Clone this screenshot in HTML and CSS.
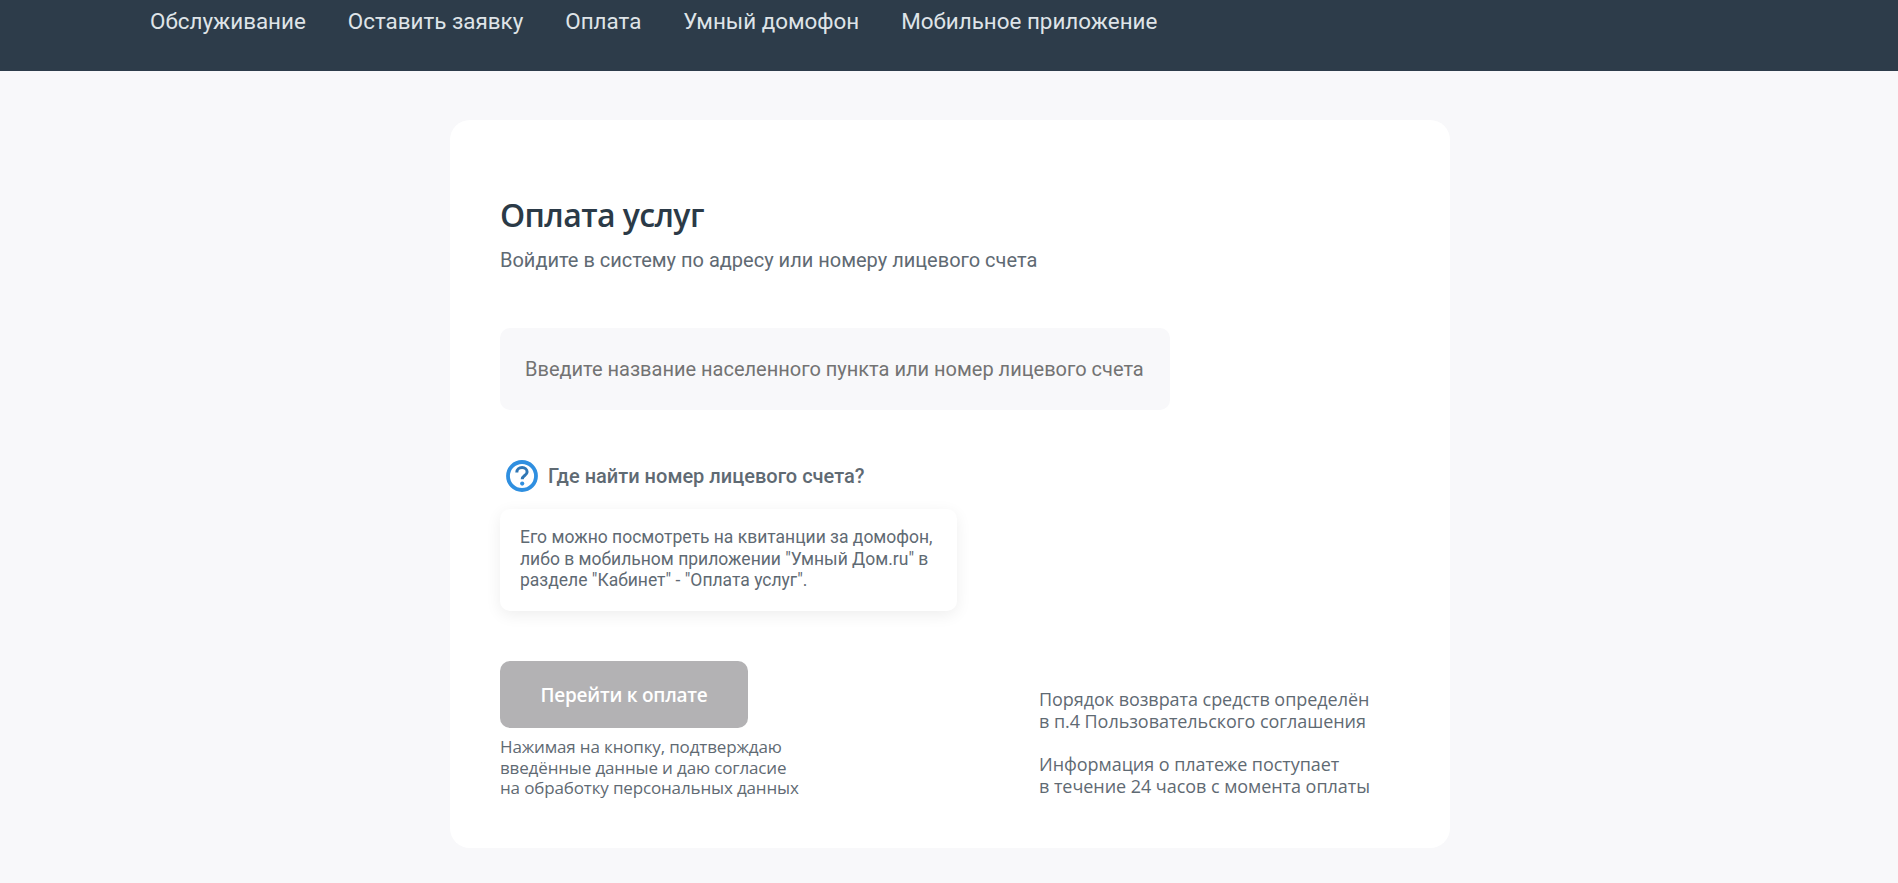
FILE: index.html
```html
<!DOCTYPE html>
<html lang="ru">
<head>
  <meta charset="UTF-8">
  <meta name="viewport" content="width=device-width, initial-scale=1.0">
  <title>Оплата услуг</title>
  <link rel="stylesheet" href="styles.css">
</head>
<body>
  <header class="topbar">
    <nav class="nav">
      <a class="nav-link" href="#">Обслуживание</a>
      <a class="nav-link" href="#">Оставить заявку</a>
      <a class="nav-link" href="#">Оплата</a>
      <a class="nav-link" href="#">Умный домофон</a>
      <a class="nav-link" href="#">Мобильное приложение</a>
    </nav>
  </header>

  <main class="card">
    <h1 class="title">Оплата услуг</h1>
    <p class="subtitle">Войдите в систему по адресу или номеру лицевого счета</p>

    <input class="search" type="text" placeholder="Введите название населенного пункта или номер лицевого счета">

    <div class="help">
      <svg class="help-icon" viewBox="0 0 32 32" width="32" height="32" aria-hidden="true">
        <circle cx="16" cy="16" r="14" fill="none" stroke="#2f8fe0" stroke-width="3.8"/>
        <path d="M10.8 12.4c0-3 2.3-4.8 5.3-4.8 2.9 0 5 1.8 5 4.3 0 3.6-4.9 3.7-4.9 7.4" fill="none" stroke="#2f76b4" stroke-width="3"/>
        <circle cx="16.2" cy="23.6" r="2.1" fill="#2f8fe0"/>
      </svg>
      <span class="help-label">Где найти номер лицевого счета?</span>
    </div>

    <div class="hint">
      Его можно посмотреть на квитанции за домофон,<br>
      либо в мобильном приложении "Умный Дом.ru" в<br>
      разделе "Кабинет" - "Оплата услуг".
    </div>

    <div class="bottom">
      <div class="pay">
        <button class="pay-button" type="button">Перейти к оплате</button>
        <p class="consent">Нажимая на кнопку, подтверждаю<br>введённые данные и даю согласие<br>на обработку персональных данных</p>
      </div>
      <div class="notes">
        <p class="note">Порядок возврата средств определён<br>в п.4 Пользовательского соглашения</p>
        <p class="note">Информация о платеже поступает<br>в течение 24 часов с момента оплаты</p>
      </div>
    </div>
  </main>
</body>
</html>
```

FILE: styles.css
```css
body {
  margin: 0;
  background-color: #f8f8fa;
  font-family: 'Roboto', sans-serif;
  color: #5f6a73;
}
.topbar {
  background-color: #2d3c4a;
  height: 71px;
}
.nav {
  display: flex;
  gap: 42px;
  padding: 7px 0 0 150px;
}
.nav-link {
  color: #dfe4e8;
  font-size: 22.4px;
  line-height: 29px;
  text-decoration: none;
}
.card {
  box-sizing: border-box;
  width: 1000px;
  height: 728px;
  margin: 49px 0 0 450px;
  padding: 75px 50px 0;
  background-color: #fff;
  border-radius: 20px;
}
.title {
  margin: 0;
  color: #2b3a47;
  font-family: 'Open Sans', sans-serif;
  font-size: 32px;
  font-weight: 600;
  letter-spacing: -0.6px;
  line-height: 40px;
}
.subtitle {
  margin: 13px 0 0;
  font-size: 20px;
  line-height: 24px;
}
.search {
  display: block;
  box-sizing: border-box;
  width: 670px;
  height: 82px;
  margin-top: 56px;
  padding: 0 25px;
  background-color: #f8f8fa;
  border: none;
  border-radius: 10px;
  font-family: 'Roboto', sans-serif;
  font-size: 20px;
}
.search::placeholder {
  color: #737373;
  opacity: 1;
}
.help {
  display: flex;
  align-items: center;
  gap: 10px;
  margin: 50px 0 0 6px;
}
.help-label {
  font-size: 20px;
  font-weight: 500;
  line-height: 32px;
}
.hint {
  box-sizing: border-box;
  width: 457px;
  height: 102px;
  margin-top: 17px;
  padding: 18px 20px;
  border-radius: 10px;
  box-shadow: 0 4px 16px rgba(0, 0, 0, 0.07);
  font-size: 17.5px;
  line-height: 21.5px;
}
.bottom {
  display: flex;
  margin-top: 50px;
}
.pay {
  width: 539px;
}
.pay-button {
  display: block;
  width: 248px;
  height: 67px;
  background-color: #b3b2b4;
  border: none;
  border-radius: 10px;
  color: #fff;
  font-family: 'Open Sans', sans-serif;
  font-size: 19px;
  font-weight: 600;
  letter-spacing: -0.25px;
}
.consent {
  margin: 9px 0 0;
  font-family: 'Open Sans', sans-serif;
  font-size: 17px;
  letter-spacing: -0.15px;
  line-height: 20.5px;
}
.notes {
  padding-top: 27px;
  font-family: 'Open Sans', sans-serif;
  font-size: 18px;
  letter-spacing: -0.05px;
  line-height: 22px;
}
.note {
  margin: 0 0 21px;
}
```
